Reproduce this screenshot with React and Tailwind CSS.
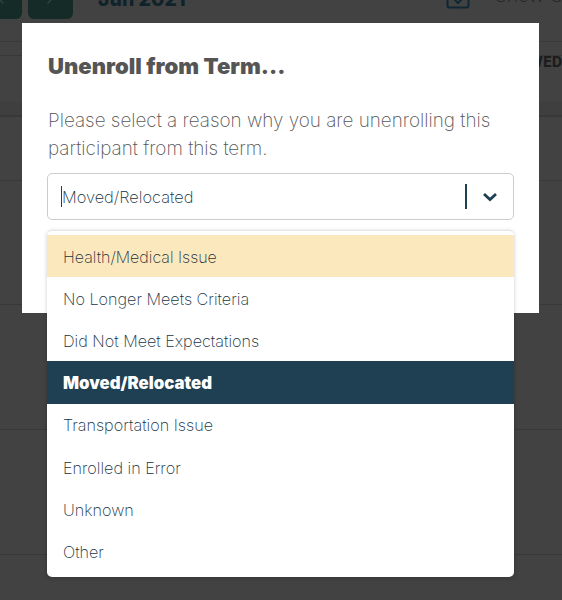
import React from "react";
import { ChevronLeft, ChevronRight } from "lucide-react";

const options = [
  "Health/Medical Issue",
  "No Longer Meets Criteria",
  "Did Not Meet Expectations",
  "Moved/Relocated",
  "Transportation Issue",
  "Enrolled in Error",
  "Unknown",
  "Other",
];

function Option({ label }) {
  const focused = label === "Health/Medical Issue";
  const selected = label === "Moved/Relocated";
  return (
    <div
      className={`flex h-[42.25px] items-center px-4 ${
        focused
          ? "bg-[#fce8bd] pt-[2px] text-[16px] font-extralight text-[#1c2f38]"
          : selected
            ? "bg-[#1f3f52] pt-[3px] text-[16.8px] font-black text-white"
            : "bg-white pt-[2px] text-[16.2px] font-extralight text-[#163242]"
      }`}
    >
      {label}
    </div>
  );
}

export default function App() {
  return (
    <div className="relative h-[600px] w-[562px] overflow-hidden bg-[#424242] font-['Inter',sans-serif]">
      <div className="flex h-[42px] items-start border-b border-[#383838]">
        <div className="-ml-[23px] -mt-[25px] flex h-[44px] w-[45px] shrink-0 items-center justify-center rounded-md bg-[#152b27] text-[#2d4440]">
          <ChevronLeft size={24} strokeWidth={1.5} />
        </div>
        <div className="-mt-[25px] ml-[6px] flex h-[44px] w-[45px] shrink-0 items-center justify-center rounded-md bg-[#152b27] text-[#2d4440]">
          <ChevronRight size={24} strokeWidth={1.5} />
        </div>
        <div className="-mt-[16px] ml-[25px] w-[100px] shrink-0 whitespace-nowrap text-[19.5px] font-extrabold leading-[30px] text-[#10232b]">Jun 2021</div>
        <svg className="-mt-[14px] ml-[248px] shrink-0" width="24" height="23" viewBox="0 0 24 23" fill="none" stroke="#0f2730" strokeWidth="2">
          <rect x="1.5" y="1" width="21" height="20.5" rx="2" />
          <path d="M8 13l4 4 4-4" />
        </svg>
        <div className="-mt-[19px] ml-[25px] shrink-0 whitespace-nowrap text-[19px] font-extralight leading-[30px] text-[#222222]">Show Only</div>
      </div>
      <div className="h-[14px] border-b border-[#383838]" />
      <div className="flex h-[46px] justify-start overflow-visible">
        <span className="ml-[528px] mt-[-3px] shrink-0 whitespace-nowrap text-[14px] font-extrabold leading-[17px] tracking-wide text-[#1c1c1c]">WED</span>
      </div>
      <div className="h-[15px] border-b-2 border-[#383838] bg-[#3f3f3f]" />
      <div className="h-[64px] border-b border-[#383838]" />
      <div className="h-[124px] border-b border-[#383838]" />
      <div className="h-[125px] border-b border-[#383838]" />
      <div className="h-[125px] border-b border-[#383838]" />

      <div className="absolute left-[22px] top-[23px] h-[290px] w-[517px] bg-white px-[26px] pt-[26px]">
        <h2 className="text-[22.1px] font-black leading-[34px] text-[#555555]">Unenroll from Term...</h2>
        <p className="mt-[24px] text-[18.9px] font-extralight leading-[28px] text-[#555555]">
          Please select a reason why you are unenrolling this participant from this term.
        </p>
        <div className="-ml-px mt-[10px] flex h-[47px] w-[467px] items-center rounded-[5px] border border-[#cccccc] bg-white">
          <span className="ml-[13px] h-[21px] w-px bg-[#1f3f52]" />
          <span className="pt-[2px] text-[16.4px] font-extralight text-[#163242]">Moved/Relocated</span>
          <span className="ml-auto h-[25px] w-[2px] bg-[#1f3f52]" />
          <svg className="ml-[15px] mr-[15px]" width="16" height="10" viewBox="0 0 16 10" fill="none" stroke="#1f3f52" strokeWidth="2.8">
            <path d="M2 2l6 5.5L14 2" />
          </svg>
        </div>
      </div>

      <div className="absolute left-[47px] top-[230px] w-[467px] overflow-hidden rounded-[5px] border-t border-[#e4e4e4] bg-white pb-[4.5px] pt-[3.5px] shadow-[0_1px_4px_rgba(0,0,0,0.2)]">
        {options.map((o) => (
          <Option key={o} label={o} />
        ))}
      </div>
    </div>
  );
}
